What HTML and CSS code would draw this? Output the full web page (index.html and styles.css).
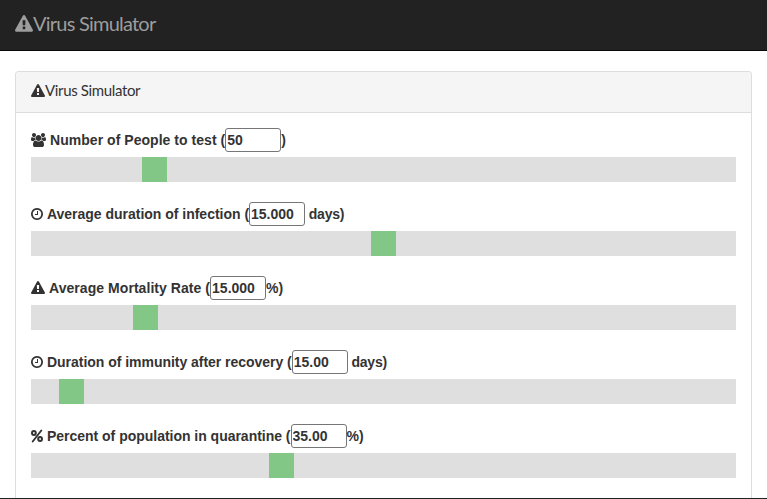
FILE: index.html
```html
<!DOCTYPE html>
<html lang="en">
<head>
<meta charset="utf-8">
<title>Virus Simulator</title>
<link rel="stylesheet" href="styles.css">
</head>
<body>
<svg class="sprite" aria-hidden="true">
  <symbol id="warning" viewBox="0 0 1792 1792"><path d="M1024 1375v-190q0-14-9.500-23.500t-22.500-9.500h-192q-13 0-22.500 9.500t-9.500 23.500v190q0 14 9.500 23.500t22.500 9.500h192q13 0 22.500-9.500t9.500-23.500zm-2-374l18-459q0-12-10-19-13-11-24-11h-220q-11 0-24 11-10 7-10 21l17 457q0 10 10 16.500t24 6.500h185q14 0 23.500-6.500t10.500-16.500zm-14-934l768 1408q35 63-2 126-17 29-46.500 46t-63.500 17h-1536q-34 0-63.500-17t-46.500-46q-37-63-2-126l768-1408q17-31 47-49t65-18 65 18 47 49z"/></symbol>
  <symbol id="clock" viewBox="128 0 1536 1792"><path d="M1024 544v448q0 14-9 23t-23 9h-320q-14 0-23-9t-9-23v-64q0-14 9-23t23-9h224v-352q0-14 9-23t23-9h64q14 0 23 9t9 23zm416 352q0-148-73-273t-198-198-273-73-273 73-198 198-73 273 73 273 198 198 273 73 273-73 198-198 73-273zm224 0q0 209-103 385.500t-279.500 279.500-385.500 103-385.500-103-279.500-279.500-103-385.500 103-385.500 279.500-279.500 385.500-103 385.500 103 279.500 279.500 103 385.500z"/></symbol>
  <symbol id="users" viewBox="0 0 1920 1792"><path d="M593 896q-162 5-265 128h-134q-82 0-138-40.500t-56-118.500q0-353 124-353 6 0 43.500 21t97.500 42.500 119 21.500q67 0 133-23-5 37-5 66 0 139 81 256zm1071 637q0 120-73 189.500t-194 69.500h-874q-121 0-194-69.500t-73-189.500q0-53 3.500-103.500t14-109 26.500-108.500 43-97.500 62-81 85.500-53.500 111.500-20q10 0 43 21.500t73 48 107 48 135 21.500 135-21.500 107-48 73-48 43-21.500q61 0 111.500 20t85.500 53.500 62 81 43 97.500 26.500 108.500 14 109 3.500 103.500zm-1024-1277q0 106-75 181t-181 75-181-75-75-181 75-181 181-75 181 75 75 181zm704 384q0 159-112.500 271.500t-271.500 112.500-271.500-112.500-112.500-271.500 112.500-271.500 271.500-112.500 271.500 112.500 112.500 271.500zm576 225q0 78-56 118.500t-138 40.500h-134q-103-123-265-128 81-117 81-256 0-29-5-66 66 23 133 23 59 0 119-21.500t97.500-42.500 43.500-21q124 0 124 353zm-128-609q0 106-75 181t-181 75-181-75-75-181 75-181 181-75 181 75 75 181z"/></symbol>
  <symbol id="percent" viewBox="0 0 12 14"><g fill="none" stroke="currentColor" stroke-width="2"><circle cx="2.900" cy="4" r="1.900"/><circle cx="9.100" cy="10" r="1.900"/><path d="M10.300 1.500L1.700 12.500" stroke-linecap="round" stroke-width="1.900"/></g></symbol>
</svg>
<header class="navbar"><a class="brand"><svg class="brand-icon"><use href="#warning"/></svg><span>Virus Simulator</span></a></header>
<main class="panel">
  <h1 class="panel-heading"><svg class="icon"><use href="#warning"/></svg><span>Virus Simulator</span></h1>
  <div class="panel-body">
    <section class="field">
      <label class="label"><svg class="icon wide"><use href="#users"/></svg><span class="name people">Number of People to test (</span><input value="50"><span>)</span></label>
      <div class="slider"><div class="handle" style="margin-left:111.400px"></div></div>
    </section>
    <section class="field">
      <label class="label"><svg class="icon narrow"><use href="#clock"/></svg><span class="name infection">Average duration of infection (</span><input value="15.000"><span class="days">&nbsp;days)</span></label>
      <div class="slider"><div class="handle" style="margin-left:340px"></div></div>
    </section>
    <section class="field">
      <label class="label"><svg class="icon"><use href="#warning"/></svg><span class="name mortality">Average Mortality Rate (</span><input value="15.000"><span>%)</span></label>
      <div class="slider"><div class="handle" style="margin-left:102px"></div></div>
    </section>
    <section class="field">
      <label class="label"><svg class="icon narrow"><use href="#clock"/></svg><span class="name immunity">Duration of immunity after recovery (</span><input value="15.00"><span class="days">&nbsp;days)</span></label>
      <div class="slider"><div class="handle" style="margin-left:28px"></div></div>
    </section>
    <section class="field">
      <label class="label"><svg class="icon narrow"><use href="#percent"/></svg><span class="name quarantine">Percent of population in quarantine (</span><input value="35.00"><span>%)</span></label>
      <div class="slider"><div class="handle" style="margin-left:238px"></div></div>
    </section>
  </div>
</main>
</body>
</html>
```
FILE: styles.css
```css
* { box-sizing: border-box; }
body {
  margin: 0;
  height: 499px;
  overflow: hidden;
  display: flex;
  flex-direction: column;
  border-bottom: 1px solid #222;
  background: #fff;
  color: #333;
  font: 14px/20px "Liberation Sans", Arial, sans-serif;
}
.sprite { display: none; }
svg { fill: currentColor; flex: none; }
.navbar {
  flex: none;
  height: 51px;
  padding: 0 15px;
  background: #222;
  border-bottom: 1px solid #080808;
}
.brand {
  display: flex;
  align-items: center;
  height: 48px;
  color: #9d9d9d;
  font: 400 20px/20px Lato, sans-serif;
  letter-spacing: -0.77px;
}
.brand span, .panel-heading span { padding-bottom: 2px; }
.brand-icon { width: 18px; height: 18px; }
.panel {
  flex: 1;
  min-height: 0;
  margin: 20px 15px 0;
  border: 1px solid #ddd;
  border-bottom: 0;
  border-radius: 4px 4px 0 0;
}
.panel-heading {
  display: flex;
  align-items: center;
  height: 41px;
  margin: 0;
  padding: 0 15px 2px;
  border-bottom: 1px solid #ddd;
  border-radius: 3px 3px 0 0;
  background: #f5f5f5;
  font: 400 15px/20px Lato, sans-serif;
  letter-spacing: -0.35px;
}
.icon { width: 14px; height: 14px; }
.wide { width: 15px; }
.narrow { width: 12px; }
.panel-body { padding: 15px; }
.field { height: 74px; }
.label {
  display: flex;
  align-items: center;
  height: 24px;
  font-weight: 700;
  white-space: pre;
}
.name { margin-left: 4px; }
.people { letter-spacing: 0.04px; }
.infection { letter-spacing: -0.015px; }
.mortality { letter-spacing: 0.055px; }
.immunity { letter-spacing: -0.03px; }
.quarantine { letter-spacing: -0.02px; }
.days { letter-spacing: -0.2px; }
input {
  width: 56px;
  height: 24px;
  margin: 0;
  padding: 1px;
  border: 1px solid #767676;
  border-radius: 3px;
  background: #fff;
  color: inherit;
  font: inherit;
}
.slider {
  height: 25px;
  margin-top: 5px;
  overflow: hidden;
  background: #dfdfdf;
}
.handle { width: 25px; height: 25px; background: #82c785; }
```
